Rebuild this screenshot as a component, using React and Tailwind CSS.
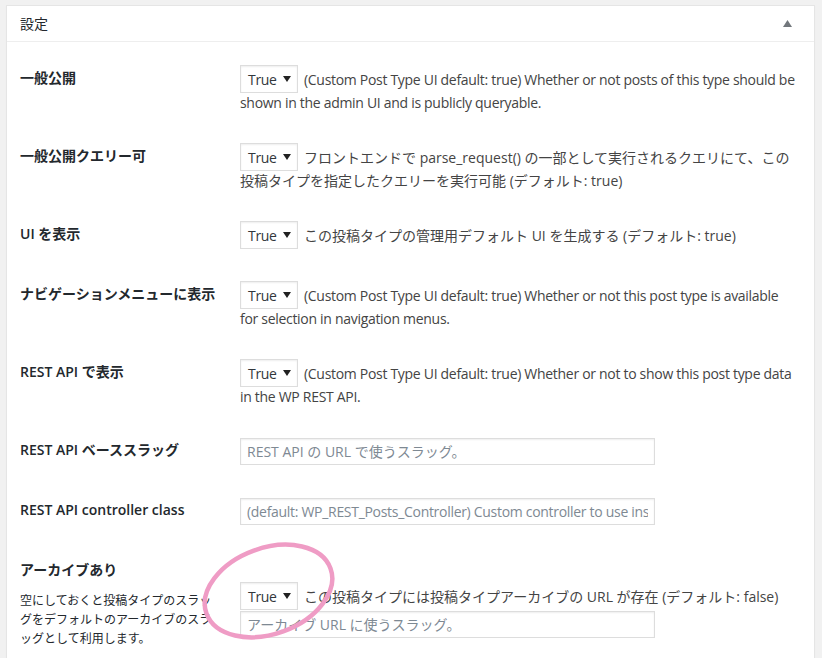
import React from "react";

const FONT = { fontFamily: '"Open Sans", "Noto Sans CJK JP", sans-serif' };

function Select() {
  return (
    <div className="flex h-[28px] w-[58px] shrink-0 items-center justify-between border border-[#ddd] bg-white pl-[7px] pr-[6px] shadow-[inset_0_1px_2px_rgba(0,0,0,0.07)]">
      <span className="text-[14px] tracking-[-0.3px] text-[#32373c]">True</span>
      <svg width="8" height="6" viewBox="0 0 8 6">
        <path d="M0 0 L8 0 L4 6 Z" fill="#222" />
      </svg>
    </div>
  );
}

function Input({ placeholder, latin }) {
  return (
    <input
      readOnly
      placeholder={placeholder}
      className={
        latin
          ? "h-[27px] w-[415px] border border-[#ddd] bg-white px-[6px] text-[14px] tracking-[-0.3px] text-[#32373c] shadow-[inset_0_1px_2px_rgba(0,0,0,0.07)] outline-none placeholder:text-[#7e8993]"
          : "h-[27px] w-[415px] border border-[#ddd] bg-white px-[6px] text-[14px] text-[#32373c] shadow-[inset_0_1px_2px_rgba(0,0,0,0.07)] outline-none placeholder:text-[#7e8993]"
      }
    />
  );
}

function Label({ children }) {
  return (
    <div className="w-[220px] shrink-0 pt-[20px] text-[14px] font-semibold leading-[18px] text-[#23282d]">
      {children}
    </div>
  );
}

function SelectRow({ label, line1, line2, latin }) {
  return (
    <div className="flex">
      <Label>{label}</Label>
      <div className={latin ? "flex-1 py-[15px] text-[14px] tracking-[-0.3px] text-[#444]" : "flex-1 py-[15px] text-[14px] text-[#444]"}>
        <div className="flex h-[30px] items-center">
          <Select />
          <span className="ml-[6px] whitespace-nowrap">{line1}</span>
        </div>
        {line2 && <div className="whitespace-nowrap leading-[18px]">{line2}</div>}
      </div>
    </div>
  );
}

function InputRow({ label, placeholder, latin }) {
  return (
    <div className="flex">
      <Label>{label}</Label>
      <div className="flex-1 py-[15px]">
        <div className="flex h-[30px] items-center">
          <Input placeholder={placeholder} latin={latin} />
        </div>
      </div>
    </div>
  );
}

export default function App() {
  return (
    <div style={FONT} className="relative h-[658px] overflow-hidden bg-[#f1f1f1] pl-[6px] pr-[7px] pt-[5px]">
      <div className="h-[700px] border border-[#e5e5e5] bg-white shadow-[0_1px_1px_rgba(0,0,0,0.04)]">
        <div className="flex h-[36px] items-center justify-between border-b border-[#eee] pl-[13px] pr-[22px]">
          <span className="text-[14px] text-[#23282d]">設定</span>
          <svg width="9" height="7" viewBox="0 0 9 7">
            <path d="M0 7 L4.5 0 L9 7 Z" fill="#72777c" />
          </svg>
        </div>
        <div className="pl-[13px] pt-[7px]">
          <SelectRow
            latin
            label="一般公開"
            line1="(Custom Post Type UI default: true) Whether or not posts of this type should be"
            line2="shown in the admin UI and is publicly queryable."
          />
          <SelectRow
            label="一般公開クエリー可"
            line1="フロントエンドで parse_request() の一部として実行されるクエリにて、この"
            line2="投稿タイプを指定したクエリーを実行可能 (デフォルト: true)"
          />
          <SelectRow
            label="UI を表示"
            line1="この投稿タイプの管理用デフォルト UI を生成する (デフォルト: true)"
          />
          <SelectRow
            latin
            label="ナビゲーションメニューに表示"
            line1="(Custom Post Type UI default: true) Whether or not this post type is available"
            line2="for selection in navigation menus."
          />
          <SelectRow
            latin
            label="REST API で表示"
            line1="(Custom Post Type UI default: true) Whether or not to show this post type data"
            line2="in the WP REST API."
          />
          <InputRow label="REST API ベーススラッグ" placeholder="REST API の URL で使うスラッグ。" />
          <InputRow
            latin
            label="REST API controller class"
            placeholder="(default: WP_REST_Posts_Controller) Custom controller to use instead of WP_REST_Posts_Controller."
          />
          <div className="flex">
            <div className="w-[220px] shrink-0 pt-[20px] text-[#23282d]">
              <div className="text-[14px] font-semibold leading-[18px]">アーカイブあり</div>
              <div className="mt-[12px] whitespace-nowrap text-[12px] leading-[19px] text-[#23282d]">
                <div>空にしておくと投稿タイプのスラッ</div>
                <div>グをデフォルトのアーカイブのスラ</div>
                <div>ッグとして利用します。</div>
              </div>
            </div>
            <div className="flex-1 pt-[40px] text-[14px] text-[#444]">
              <div className="flex h-[30px] items-center">
                <Select />
                <span className="ml-[6px] whitespace-nowrap">
                  この投稿タイプには投稿タイプアーカイブの URL が存在 (デフォルト: false)
                </span>
              </div>
              <Input placeholder="アーカイブ URL に使うスラッグ。" />
            </div>
          </div>
        </div>
      </div>
      <svg className="pointer-events-none absolute left-[190px] top-[530px]" width="160" height="125" viewBox="0 0 160 125">
        <ellipse cx="78.5" cy="61" rx="66" ry="43" transform="rotate(-20 78.5 61)" fill="none" stroke="#ef9cc5" strokeWidth="4.5" />
      </svg>
    </div>
  );
}
